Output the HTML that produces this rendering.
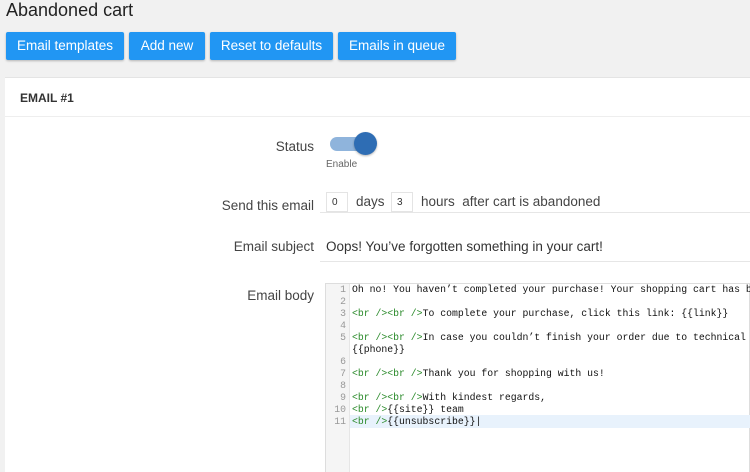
<!DOCTYPE html>
<html style="overflow:hidden;height:472px"><head><style>
body{margin:0;width:750px;height:472px;background:#f1f1f1;font-family:"Liberation Sans",sans-serif;overflow:hidden;position:relative}
.a{position:absolute}
.t{left:6px;top:0px;font-size:18px;color:#222}
.b{top:32px;height:28px;background:#2196f3;color:#fff;font-size:13.5px;line-height:28px;text-align:center;border-radius:2px;box-shadow:0 1px 2px rgba(0,0,0,.25)}
.p{left:5px;top:77px;width:745px;height:395px;background:#fff;border-top:1px solid #e4e4e4}
.h{left:20px;top:91px;font-size:12px;font-weight:bold;color:#333}
.sep{left:5px;top:116px;width:745px;height:1px;background:#eee}
.l{right:436px;font-size:13.5px;color:#444;text-align:right}
.u{left:320px;width:430px;height:1px;background:#e6e6e6}
.in{top:192px;width:22px;height:20px;border:1px solid #e4e4e4;font-size:10px;line-height:20px;padding-left:5px;box-sizing:border-box;color:#333}
.ed{left:325px;top:283px;width:425px;height:189px;border:1px solid #ddd;border-bottom:none;background:#fff;box-sizing:border-box}
.g{left:326px;top:284px;width:23px;height:188px;background:#f5f5f5;border-right:1px solid #e6e6e6}
.code{font-family:"Liberation Mono",monospace;font-size:9.8px;line-height:12px;color:#111;white-space:pre}
.n{left:326px;width:20px;text-align:right;color:#999}
.c{left:352px}
.k{color:#2a8a2a}
</style></head><body>
<div class="a t">Abandoned cart</div>
<div class="a b" style="left:6px;width:118px">Email templates</div>
<div class="a b" style="left:129px;width:76px">Add new</div>
<div class="a b" style="left:210px;width:123px">Reset to defaults</div>
<div class="a b" style="left:338px;width:118px">Emails in queue</div>
<div class="a p"></div>
<div class="a h">EMAIL #1</div>
<div class="a sep"></div>
<div class="a l" style="top:139px">Status</div>
<div class="a" style="left:330px;top:137px;width:40px;height:14px;border-radius:7px;background:#8fb4dc"></div>
<div class="a" style="left:354px;top:132px;width:23px;height:23px;border-radius:50%;background:#2e6db4;box-shadow:0 1px 2px rgba(0,0,0,.3)"></div>
<div class="a" style="left:326px;top:159px;font-size:10px;color:#666">Enable</div>
<div class="a l" style="top:198px">Send this email</div>
<div class="a in" style="left:326px">0</div>
<div class="a" style="left:356px;top:194px;font-size:13.5px;color:#444">days</div>
<div class="a in" style="left:391px">3</div>
<div class="a" style="left:421px;top:194px;font-size:13.5px;color:#444">hours&nbsp; after cart is abandoned</div>
<div class="a u" style="top:212px"></div>
<div class="a l" style="top:239px">Email subject</div>
<div class="a" style="left:326px;top:239px;font-size:13.5px;color:#333">Oops! You’ve forgotten something in your cart!</div>
<div class="a u" style="top:261px"></div>
<div class="a l" style="top:288px">Email body</div>
<div class="a ed"></div>
<div class="a g"></div>
<div class="a" style="left:350px;top:415px;width:400px;height:13px;background:#e8f2fc"></div>
<div class="a code n" style="top:284px">1
2
3
4
5

6
7
8
9
10
11</div>
<div class="a code c" style="top:284px">Oh no! You haven’t completed your purchase! Your shopping cart has bee
 
<span class="k">&lt;br /&gt;&lt;br /&gt;</span>To complete your purchase, click this link: {{link}}
 
<span class="k">&lt;br /&gt;&lt;br /&gt;</span>In case you couldn’t finish your order due to technical is
{{phone}}
 
<span class="k">&lt;br /&gt;&lt;br /&gt;</span>Thank you for shopping with us!
 
<span class="k">&lt;br /&gt;&lt;br /&gt;</span>With kindest regards,
<span class="k">&lt;br /&gt;</span>{{site}} team
<span class="k">&lt;br /&gt;</span>{{unsubscribe}}|</div>
</body></html>
